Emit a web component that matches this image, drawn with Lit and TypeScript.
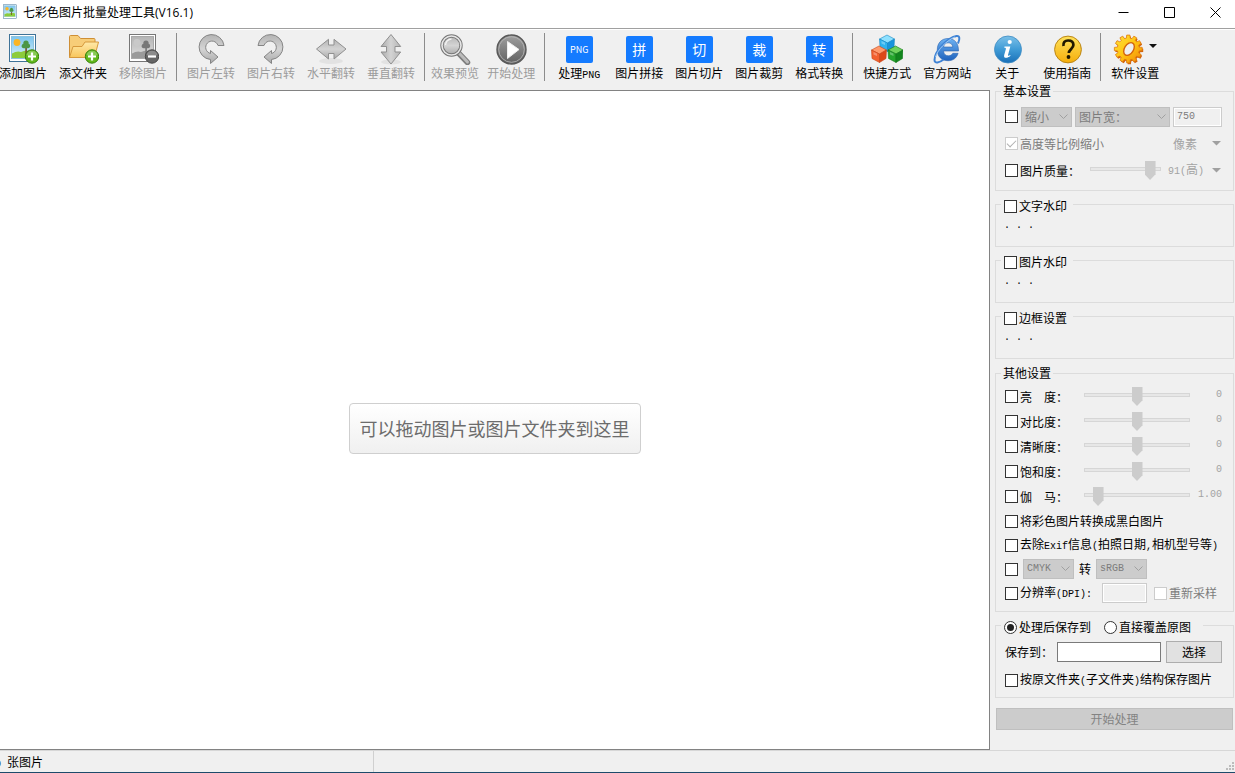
import { LitElement, html, css, svg, nothing } from "lit";
import type { TemplateResult } from "lit";
import { customElement, property, state } from "lit/decorators.js";

const cjk = css`"Noto Sans CJK SC", sans-serif`;

const picture = (gray: boolean) => {
  const id = gray ? "pic-g" : "pic-c";
  return svg`
    <defs>
      <linearGradient id=${id} x1="0" y1="0" x2="0" y2="1">
        <stop offset="0" stop-color=${gray ? "#b4b4b4" : "#7cc4ee"} />
        <stop offset="1" stop-color=${gray ? "#e0e0e0" : "#d8f1fb"} />
      </linearGradient>
    </defs>
    <rect x="2.5" y="1.5" width="26" height="27" fill="#fff" stroke=${gray ? "#777" : "#3f7398"} />
    <rect x="4.5" y="3.5" width="22" height="22" fill="url(#${id})" stroke=${gray ? "#a8a8a8" : "#8fc3dd"} />
    <circle cx="10" cy="9.5" r="3.4" fill=${gray ? "#c9c9c9" : "#fbb524"} />
    <path d="M5 20.5q5-3 9-1.5 6-3 12 0V25H5z" fill=${gray ? "#9a9a9a" : "#8ccc3c"} />
    <path d="M18.3 15h1.6v7h-1.6z" fill=${gray ? "#777" : "#76502c"} />
    <path d="M19 7.500c2 0 3 1.800 2.600 3.200 2 .4 2.400 4.300-.6 4.600h-4.200c-3-.3-2.600-4-.4-4.600-.4-1.400.6-3.200 2.600-3.200z" fill=${gray ? "#777" : "#4c9645"} />`;
};

const badge = (plus: boolean) => svg`
  <circle cx="25" cy="23.500" r="6.700" fill=${plus ? "#62b81c" : "#666"} stroke=${plus ? "#38820c" : "#484848"} />
  <path d="M19.500 22a5.700 5.700 0 0 1 11 0q-5.500 2-11 0z" fill="#fff" opacity=".25" />
  <path d=${plus ? "M21 23.500h8M25 19.500v8" : "M21 23.500h8"} stroke="#fff" stroke-width="2.200" />`;

const silver = (id: string) => svg`
  <defs><linearGradient id=${id} x1="0" y1="0" x2="0" y2="1">
    <stop offset="0" stop-color="#b4b4b4" /><stop offset=".5" stop-color="#d4d4d4" /><stop offset="1" stop-color="#a9a9a9" />
  </linearGradient></defs>`;

const turn = "M29 12.500A12.500 12.500 0 1 0 15.500 26.500V30.500L23 24 15.500 17.500V20.500A6.300 6.300 0 1 1 23 12.500Z";
const flip = "M1.500 16 13.500 6.300V12H19V6.300L31 16 19 26V20.500H13.500V26Z";

const gear = (cx: number, cy: number, teeth: number, outer: number, inner: number) => {
  const points: string[] = [];
  for (let i = 0; i < teeth; i++) {
    for (const [offset, r] of [[-0.34, inner], [-0.22, outer], [0.22, outer], [0.34, inner]]) {
      const angle = ((i + offset) / teeth) * Math.PI * 2;
      points.push(`${(cx + r * Math.cos(angle)).toFixed(2)} ${(cy + r * Math.sin(angle)).toFixed(2)}`);
    }
  }
  return `M${points.join("L")}Z`;
};

const cube = (x: number, y: number, top: string, left: string, right: string, edge: string) => svg`
  <g transform="translate(${x} ${y})" stroke=${edge} stroke-width=".6" stroke-linejoin="round">
    <path d="M0 4 7.500 0 15 4 8 8z" fill=${top} />
    <path d="M0 4 8 8V16.500L.5 12.500z" fill=${left} />
    <path d="M15 4 8 8V16.500L14.500 12.500z" fill=${right} />
    <path d="M2 6 5.500 7.500V10L2 8.500z" fill="#fff" opacity=".3" stroke="none" />
  </g>`;

const icons: Record<string, () => TemplateResult<2>> = {
  picture: () => svg`${picture(false)}`,
  addPicture: () => svg`${picture(false)}${badge(true)}`,
  removePicture: () => svg`${picture(true)}${badge(false)}`,
  folder: () => svg`
    <defs><linearGradient id="fold" x1="0" y1="0" x2="0" y2="1">
      <stop offset="0" stop-color="#ffe9a8" /><stop offset="1" stop-color="#f8c65c" />
    </linearGradient></defs>
    <path d="M2.500 24.500V3.500q0-1 1-1H11l2.500 3H27q1 0 1 1V24z" fill="#f7cd78" stroke="#cf8f35" />
    <path d="M2.500 24.500 6 13.500h9l3-4.500h13.500l-4 15.500z" fill="url(#fold)" stroke="#d6993c" />
    ${badge(true)}`,
  turnLeft: () => svg`${silver("s1")}<path d=${turn} fill="url(#s1)" stroke="#858585" />`,
  turnRight: () => svg`${silver("s2")}<path transform="matrix(-1 0 0 1 32 0)" d=${turn} fill="url(#s2)" stroke="#858585" />`,
  flipX: () => svg`${silver("s3")}<ellipse cx="16" cy="28" rx="12" ry="3" fill="#e2e2e2" />
    <path d=${flip} fill="url(#s3)" stroke="#909090" />`,
  flipY: () => svg`${silver("s4")}<ellipse cx="16" cy="29" rx="10" ry="2.500" fill="#e2e2e2" />
    <path transform="rotate(90 16 16)" d=${flip} fill="url(#s4)" stroke="#909090" />`,
  search: () => svg`${silver("s5")}
    <path d="m19.500 20 9 9.500" stroke="#7d7d7d" stroke-width="5.500" stroke-linecap="round" />
    <path d="m19.500 19.500 9 9.500" stroke="#bcbcbc" stroke-width="3" stroke-linecap="round" />
    <circle cx="12.500" cy="12.500" r="9.500" fill="url(#s5)" stroke="#777" stroke-width="3.400" />
    <circle cx="12.500" cy="12.500" r="9.500" fill="none" stroke="#e6e6e6" stroke-width="1.600" />
    <path d="M6.500 12a6 6 0 0 1 6-6" fill="none" stroke="#f3f3f3" stroke-width="1.500" />`,
  play: () => svg`
    <defs><linearGradient id="play" x1="0" y1="0" x2="0" y2="1">
      <stop offset="0" stop-color="#a0a0a0" /><stop offset="1" stop-color="#606060" />
    </linearGradient></defs>
    <circle cx="16.500" cy="16.500" r="14.500" fill="url(#play)" stroke="#585858" stroke-width="1.400" />
    <circle cx="16.500" cy="16.500" r="12.800" fill="none" stroke="#b8b8b8" stroke-width=".8" />
    <path d="M12.500 8.500 24 16.500 12.500 25.500z" fill="#fff" stroke="#eee" stroke-linejoin="round" />`,
  cubes: () => svg`
    ${cube(8.5, 2, "#8ee1ff", "#2fb3ef", "#1994dc", "#1888c4")}
    ${cube(0.5, 13, "#ff9a6c", "#f3602e", "#dc4718", "#c64417")}
    ${cube(17, 13, "#6fd25c", "#25a52d", "#12861e", "#11761a")}`,
  browser: () => svg`
    <defs><linearGradient id="ie" x1="0" y1="0" x2="0" y2="1">
      <stop offset="0" stop-color="#6db2f2" /><stop offset="1" stop-color="#1f62bd" />
    </linearGradient></defs>
    <path fill-rule="evenodd" d="M17 5.500c6.500 0 10.700 4.700 10.500 12.500H12.500c.3 3.300 2.300 4.800 4.900 4.800 2.200 0 3.600-.9 4.400-2.500h5.300c-1.500 4.800-5 7.400-10 7.400-6.700 0-10.800-4.300-10.800-11C6.300 10 10.600 5.500 17 5.500zM12.600 14h9.200c-.3-2.700-2-4.200-4.600-4.200s-4.200 1.500-4.600 4.200z" fill="url(#ie)" stroke="#2a63b0" stroke-width=".6" />
    <path d="M27 10.500c2-4.500 2-8-1.500-7.500C17 4.500 3.500 18 3.500 27c0 4 5 2.800 9-.5" fill="none" stroke="#3f83d5" stroke-width="2" />
    <path d="M24 4C16 7 6.500 17 4.500 24" fill="none" stroke="#b9dbfa" stroke-width=".8" />`,
  info: () => svg`
    <defs><linearGradient id="info" x1="0" y1="0" x2="0" y2="1">
      <stop offset="0" stop-color="#7cc0e8" /><stop offset=".5" stop-color="#3f9bd6" /><stop offset="1" stop-color="#1a70b8" />
    </linearGradient></defs>
    <circle cx="17" cy="16.500" r="13.500" fill="url(#info)" stroke="#3c8ac2" stroke-width=".8" />
    <circle cx="18.700" cy="9" r="2.100" fill="#fff" />
    <path d="M13.500 13.600h5.800L17 22c-.3 1.200.8 1 2.200 0l.3.8c-3.500 3-7.300 2.700-6.300-.8l1.700-6c.3-1-.3-1.300-1.600-1.300z" fill="#fff" />`,
  help: () => svg`
    <defs><linearGradient id="help" x1="0" y1="0" x2="0" y2="1">
      <stop offset="0" stop-color="#ffe25a" /><stop offset="1" stop-color="#f5ae0c" />
    </linearGradient></defs>
    <circle cx="17" cy="16.500" r="13.400" fill="url(#help)" stroke="#bb8618" />
    <path d="M12.500 13c-.6-3.500 1.400-5.500 4.600-5.500 3.400 0 5.300 1.800 5.300 4.500 0 3.600-4.400 4.200-4.600 8" fill="none" stroke="#201800" stroke-width="2.700" />
    <circle cx="17.500" cy="24" r="1.900" fill="#201800" />`,
  gear: () => svg`
    <defs><linearGradient id="gear" x1="0" y1="0" x2="1" y2="1">
      <stop offset="0" stop-color="#ffe23c" /><stop offset=".5" stop-color="#ffc412" /><stop offset="1" stop-color="#f0860a" />
    </linearGradient></defs>
    <path d=${gear(16.3, 17.3, 12, 14, 11)} fill="#d2630a" />
    <path d=${gear(15.3, 16, 12, 14, 11)} fill="url(#gear)" stroke="#e07a0c" stroke-width=".8" />
    <ellipse cx="16" cy="16" rx="4.500" ry="7" transform="rotate(32 16 16)" fill="#efefef" stroke="#d2630a" stroke-width="1.400" />`,
};

const icon = (name: string) => html`<svg class="icon" viewBox="0 0 32 32" aria-hidden="true">${icons[name]()}</svg>`;

interface Tool {
  label: string;
  latin?: string;
  icon?: string;
  tile?: string;
  off?: boolean;
  menu?: boolean;
}

const groups: Tool[][] = [
  [
    { label: "添加图片", icon: "addPicture" },
    { label: "添文件夹", icon: "folder" },
    { label: "移除图片", icon: "removePicture", off: true },
  ],
  [
    { label: "图片左转", icon: "turnLeft", off: true },
    { label: "图片右转", icon: "turnRight", off: true },
    { label: "水平翻转", icon: "flipX", off: true },
    { label: "垂直翻转", icon: "flipY", off: true },
  ],
  [
    { label: "效果预览", icon: "search", off: true },
    { label: "开始处理", icon: "play", off: true },
  ],
  [
    { label: "处理", latin: "PNG", tile: "PNG" },
    { label: "图片拼接", tile: "拼" },
    { label: "图片切片", tile: "切" },
    { label: "图片裁剪", tile: "裁" },
    { label: "格式转换", tile: "转" },
  ],
  [
    { label: "快捷方式", icon: "cubes" },
    { label: "官方网站", icon: "browser" },
    { label: "关于", icon: "info" },
    { label: "使用指南", icon: "help" },
  ],
  [{ label: "软件设置", icon: "gear", menu: true }],
];

@customElement("tool-bar")
export class ToolBar extends LitElement {
  static styles = css`
    :host { display: block; overflow: hidden; border-top: 1px solid #a0a0a0; }
    .bar { display: flex; margin-left: -7px; padding-top: 3px; border-top: 1px solid #fff; }
    .group { display: flex; }
    .group + .group::before { content: ""; width: 1px; height: 48px; margin: 0 4px 0 3px; background: #8c8c8c; }
    .compact { margin: 0 2px 0 0; }
    .compact .tool { padding: 0 4px; }
    .compact .tool:first-child { margin-left: -2px; }
    .tool { display: flex; flex-direction: column; align-items: center; padding: 0 6px; min-width: 56px; border: 0; background: none; color: #000; font: 12px/16px ${cjk}; white-space: nowrap; }
    .tool:disabled { color: #9c9c9c; }
    .face { display: flex; align-items: center; gap: 4px; height: 32px; }
    .wide .tool { min-width: 60px; }
    .icon { display: block; width: 32px; height: 32px; }
    .tile { display: grid; place-items: center; width: 27px; height: 27px; border-radius: 2px; background: #147bff; color: #fff; font-size: 14px; line-height: 27px; }
    .small { font-size: 9px; }
    .arrow { width: 8px; height: 32px; }
    .latin { font: 10px/16px "Liberation Mono", monospace; }
  `;

  render() {
    return html`<nav class="bar" aria-label="工具栏">
      ${groups.map((group, i) => html`<div class="group ${i === 2 ? "compact" : "wide"}">
        ${group.map((tool) => html`<button class="tool" type="button" ?disabled=${tool.off ?? false}>
          <span class="face">
            ${tool.icon ? icon(tool.icon) : html`<span class="tile ${tool.tile === "PNG" ? "small" : ""}">${tool.tile}</span>`}
            ${tool.menu ? html`<svg class="arrow" viewBox="0 0 8 32" aria-hidden="true"><path d="M0 11h8l-4 4z" fill="#111" /></svg>` : nothing}
          </span>
          <span>${tool.label}${tool.latin ? html`<span class="latin">${tool.latin}</span>` : nothing}</span>
        </button>`)}
      </div>`)}
    </nav>`;
  }
}

@customElement("drop-down")
export class DropDown extends LitElement {
  @property() value = "";
  @property() label = "";
  @property({ type: Boolean }) latin = false;

  static styles = css`
    :host { display: grid; }
    .list { grid-area: 1 / 1; appearance: none; width: 100%; height: 20px; padding: 0 0 0 3px; border: 1px solid #bfbfbf; border-radius: 0; background: #ccc; color: #7c7c7c; opacity: 1; font: 12px/18px ${cjk}; }
    .latin { font: 10px/18px "Liberation Mono", monospace; }
    .chevron { grid-area: 1 / 1; place-self: center end; width: 9px; height: 6px; margin-right: 4px; pointer-events: none; }
  `;

  render() {
    return html`<select class="list ${this.latin ? "latin" : ""}" aria-label=${this.label} disabled>
        <option>${this.value}</option>
      </select>
      <svg class="chevron" viewBox="0 0 9 6" aria-hidden="true"><path d="m.5.500 4 4 4-4" fill="none" stroke="#a0a0a0" /></svg>`;
  }
}

@customElement("settings-panel")
export class SettingsPanel extends LitElement {
  @state() private target = "folder";

  static styles = css`
    :host { display: block; box-sizing: border-box; padding: 0 1px 0 5px; color: #000; font: 12px/14px ${cjk}; white-space: nowrap; }
    .panel { display: flex; flex-direction: column; gap: 4px; margin: 0; }
    .box { min-width: 0; margin: 0; padding: 5px 11px 6px 5px; border: 1px solid #dcdcdc; }
    .title { padding: 0 2px; }
    .option { padding: 4px 6px 0 3px; }
    .options { padding-right: 12px; }
    .choices { display: flex; gap: 13px; }
    .others { margin-top: 3px; padding-top: 4px; }
    .save { padding-top: 4px; padding-bottom: 3px; }
    .row { display: flex; align-items: center; height: 27px; padding-left: 4px; }
    .level { height: 25px; }
    .line { height: 24px; }
    .last { margin-top: 2px; }
    .dots { padding: 2px 0 4px 3px; height: 16px; font: 10px/16px "Liberation Mono", monospace; }
    .check { display: flex; align-items: center; gap: 2px; }
    .mark { flex: none; appearance: none; display: grid; place-items: center; width: 13px; height: 13px; margin: 0; border: 1px solid #333; background: #fff; }
    .mark:disabled { border-color: #ccc; }
    .mark:checked::before { content: ""; width: 8px; height: 4px; margin-top: -3px; border: solid #b0b0b0; border-width: 0 0 1px 1px; transform: rotate(-45deg); }
    .round, .round:checked { border-radius: 50%; }
    .round:checked::before { width: 7px; height: 7px; margin: 0; border: 0; border-radius: 50%; background: #222; transform: none; }
    .faded { color: #7c7c7c; }
    .pale { color: #a3a3a3; }
    .latin { font: 10px/14px "Liberation Mono", monospace; }
    .end { margin-left: auto; }
    .menu { display: flex; align-items: center; gap: 8px; padding: 0 1px 0 0; border: 0; background: none; color: #a3a3a3; font: inherit; }
    .unit { gap: 15px; }
    .arrow { width: 9px; height: 5px; }
    .short { width: 51px; }
    .long { flex: 1; }
    .size { display: flex; flex: 1; gap: 3px; margin-left: 3px; }
    .space { display: flex; flex: 1; align-items: center; gap: 5px; margin-left: 5px; }
    .field { box-sizing: border-box; height: 20px; padding: 0 3px; border: 1px solid #7a7a7a; border-radius: 0; background: #fff; min-width: 0; }
    .field:disabled { border-color: #ccc; background: #f0f0f0; color: #7c7c7c; box-shadow: inset 0 0 0 1px #fff; }
    .width { width: 49px; }
    .dpi { width: 45px; margin-right: 7px; }
    .resolution { width: 97px; }
    .path { flex: 1; margin: 0 5px 0 4px; }
    .slider { appearance: none; flex: none; width: 106px; height: 19px; margin: 0 0 0 auto; background: linear-gradient(#d6d6d6, #d6d6d6) 0 6px / 100% 4px no-repeat; }
    .slider::-webkit-slider-runnable-track { height: 19px; background: linear-gradient(#e7e7e7, #e7e7e7) 1px 7px / calc(100% - 2px) 2px no-repeat; }
    .slider::-webkit-slider-thumb { appearance: none; width: 11px; height: 19px; background: #ccc; clip-path: polygon(0 0, 100% 0, 100% 70%, 50% 100%, 0 70%); }
    .quality { width: 71px; margin-right: 7px; }
    .amount { width: 32px; margin-bottom: 4px; text-align: right; }
    .push { box-sizing: border-box; height: 22px; padding: 0 15px; border: 1px solid #adadad; background: #e1e1e1; color: #000; font: inherit; }
    .start { margin: 6px 1px 0; padding: 0; }
    .start:disabled { border-color: #bfbfbf; background: #ccc; color: #838383; }
  `;

  private check(text: unknown, extra = "", off = false, on = false) {
    return html`<label class="check ${extra}"><input class="mark" type="checkbox" ?disabled=${off} .checked=${on} /><span>${text}</span></label>`;
  }

  private latin(text: string) {
    return html`<span class="latin">${text}</span>`;
  }

  private arrow() {
    return html`<svg class="arrow" viewBox="0 0 9 5" aria-hidden="true"><path d="M0 0h9L4.500 4.500z" fill="#a0a0a0" /></svg>`;
  }

  private radio(value: string, text: string) {
    return html`<label class="check"><input class="mark round" type="radio" name="target" .checked=${this.target === value}
      @change=${() => (this.target = value)} /><span>${text}</span></label>`;
  }

  render() {
    const levels: [string, string, number][] = [
      ["亮　度：", "0", 50],
      ["对比度：", "0", 50],
      ["清晰度：", "0", 50],
      ["饱和度：", "0", 50],
      ["伽　马：", "1.00", 9],
    ];
    return html`<form class="panel" @submit=${(e: Event) => e.preventDefault()}>
      <fieldset class="box">
        <legend class="title">基本设置</legend>
        <div class="row">
          <input class="mark" type="checkbox" aria-label="缩小" />
          <div class="size">
            <drop-down class="short" value="缩小" label="缩放方式"></drop-down>
            <drop-down class="long" value="图片宽：" label="缩放依据"></drop-down>
            <input class="field width latin" value="750" aria-label="图片宽" disabled />
          </div>
        </div>
        <div class="row">
          ${this.check("高度等比例缩小", "faded", true, true)}
          <button class="menu unit end" type="button" disabled><span>像素</span>${this.arrow()}</button>
        </div>
        <div class="row">
          ${this.check("图片质量：")}
          <input class="slider quality" type="range" value="91" aria-label="图片质量" disabled />
          <button class="menu" type="button" disabled><span>${this.latin("91(")}高${this.latin(")")}</span>${this.arrow()}</button>
        </div>
      </fieldset>
      ${["文字水印", "图片水印", "边框设置"].map((name) => html`<fieldset class="box">
        <legend class="option">${this.check(name)}</legend>
        <div class="dots">· · ·</div>
      </fieldset>`)}
      <fieldset class="box others">
        <legend class="title">其他设置</legend>
        ${levels.map(([name, amount, position]) => html`<div class="row level">
          ${this.check(name)}
          <input class="slider" type="range" value=${position} aria-label=${name} disabled />
          <output class="amount pale latin">${amount}</output>
        </div>`)}
        <div class="row line">${this.check("将彩色图片转换成黑白图片")}</div>
        <div class="row line">${this.check(html`去除${this.latin("Exif")}信息${this.latin("(")}拍照日期${this.latin(",")}相机型号等${this.latin(")")}`)}</div>
        <div class="row line">
          <input class="mark" type="checkbox" aria-label="转换颜色模式" />
          <div class="space">
            <drop-down class="short" value="CMYK" label="原颜色模式" latin></drop-down>
            <span>转</span>
            <drop-down class="short" value="sRGB" label="目标颜色模式" latin></drop-down>
          </div>
        </div>
        <div class="row line">
          ${this.check(html`分辨率${this.latin("(DPI):")}`, "resolution")}
          <input class="field dpi latin" aria-label="分辨率" disabled />
          ${this.check("重新采样", "faded", true)}
        </div>
      </fieldset>
      <fieldset class="box save">
        <legend class="option options">
          <div class="choices">${this.radio("folder", "处理后保存到")}${this.radio("source", "直接覆盖原图")}</div>
        </legend>
        <div class="row">
          <label for="path">保存到：</label>
          <input class="field path" id="path" />
          <button class="push" type="button">选择</button>
        </div>
        <div class="row last">${this.check(html`按原文件夹${this.latin("(")}子文件夹${this.latin(")")}结构保存图片`)}</div>
      </fieldset>
      <button class="push start" type="submit" disabled>开始处理</button>
    </form>`;
  }
}

@customElement("app-root")
export class AppRoot extends LitElement {
  static styles = css`
    :host { display: flex; flex-direction: column; box-sizing: border-box; min-height: 100vh; overflow: hidden; border-bottom: 1px solid #1d4b6b; background: #f0f0f0; color: #000; font: 12px/16px ${cjk}; }
    .caption { display: flex; align-items: center; gap: 5px; height: 28px; padding: 0 0 0 2px; background: #fff; overflow: hidden; }
    .icon { width: 16px; height: 16px; margin-bottom: 4px; }
    .name { margin: 0 auto 2px 0; font: 12px/16px "Open Sans", ${cjk}; }
    .controls { display: flex; margin: 0 -3px 4px 0; }
    .control { display: grid; place-items: center; width: 46px; height: 24px; padding: 0; border: 0; background: none; }
    .glyph { width: 11px; height: 11px; }
    .work { display: flex; flex: 1; }
    .drop { display: grid; place-items: center; flex: 1; min-width: 0; margin-top: 6px; padding-top: 17px; border: solid #828282; border-width: 1px 1px 1px 0; background: #fff; }
    .hint { margin: 0; padding: 11px 10px; border: 1px solid #cfcfcf; border-radius: 4px; background: linear-gradient(#fff, #f0f0f0); color: #6c6c6c; font-size: 18px; line-height: 27px; }
    .side { flex: none; width: 245px; }
    .status { display: flex; align-items: stretch; justify-content: space-between; height: 21px; border-top: 1px solid #d7d7d7; line-height: 21px; overflow: hidden; }
    .count { width: 379px; box-sizing: border-box; margin-left: -5px; border-right: 1px solid #d0d0d0; }
    .number { font: 10px/21px "Liberation Mono", monospace; }
    .grip { align-self: end; width: 11px; height: 11px; }
  `;

  render() {
    const controls = [
      ["最小化", "M.500 5.500H10.500"],
      ["最大化", "M.500.500H10.500V10.500H.500Z"],
      ["关闭", "M.500.500 10.500 10.500M10.500.500.500 10.500"],
    ];
    return html`
      <header class="caption">
        ${icon("picture")}
        <h1 class="name">七彩色图片批量处理工具(V16.1)</h1>
        <div class="controls">
          ${controls.map(([label, path]) => html`<button class="control" type="button" aria-label=${label}>
            <svg class="glyph" viewBox="0 0 11 11"><path d=${path} fill="none" stroke="#000" /></svg>
          </button>`)}
        </div>
      </header>
      <tool-bar></tool-bar>
      <main class="work">
        <section class="drop"><p class="hint">可以拖动图片或图片文件夹到这里</p></section>
        <settings-panel class="side"></settings-panel>
      </main>
      <footer class="status">
        <span class="count"><span class="number">0&nbsp;</span>张图片</span>
        <svg class="grip" viewBox="0 0 11 11" aria-hidden="true">
          <path d="M8 1h2v2H8zM5 4h2v2H5zM8 4h2v2H8zM2 7h2v2H2zM5 7h2v2H5zM8 7h2v2H8z" fill="#bcbcbc" />
        </svg>
      </footer>`;
  }
}
